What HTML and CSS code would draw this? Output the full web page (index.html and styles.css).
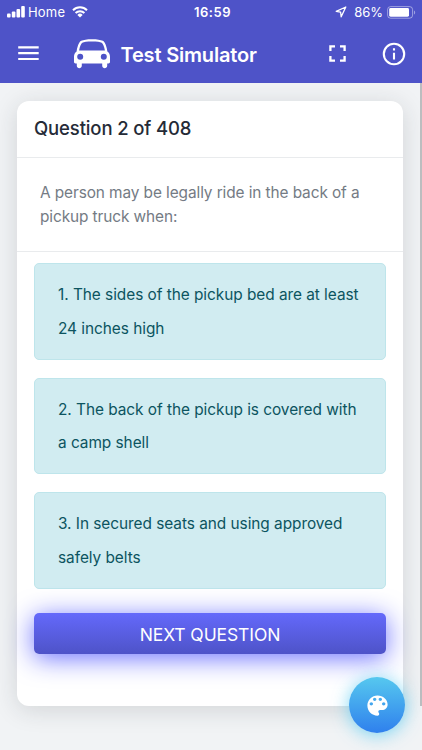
FILE: index.html
```html
<!DOCTYPE html>
<html lang="en">
<head>
    <meta charset="UTF-8">
    <meta name="viewport" content="width=device-width, initial-scale=1.0">
    <title>Test Simulator</title>
    <link rel="stylesheet" href="styles.css">
</head>
<body>
    <header class="app-header">
        <div class="status-bar">
            <div class="status-left">
                <svg class="signal" width="19" height="12" viewBox="0 0 19 12" fill="#fff">
                    <rect x="0" y="7.5" width="3.6" height="4" rx="1"/>
                    <rect x="4.8" y="5.5" width="3.6" height="6" rx="1"/>
                    <rect x="9.5" y="3" width="3.6" height="8.5" rx="1"/>
                    <rect x="14.2" y="0" width="3.6" height="11.5" rx="1"/>
                </svg>
                <span class="carrier">Home</span>
                <svg class="wifi" width="16" height="12" viewBox="0 0 16 12" fill="none" stroke="#fff" stroke-width="2">
                    <path d="M1 4.2a10 10 0 0 1 14 0M3.6 7a6.3 6.3 0 0 1 8.8 0"/>
                    <path d="M8 11.5 5.4 8.9a3.7 3.7 0 0 1 5.2 0z" fill="#fff" stroke="none"/>
                </svg>
            </div>
            <span class="clock">16:59</span>
            <div class="status-right">
                <svg width="12" height="12" viewBox="0 0 12 12" fill="none" stroke="#fff" stroke-width="1.3" stroke-linejoin="round">
                    <path d="M10.8 1 1.2 5.3l4.4.9.6 4.6z"/>
                </svg>
                <span class="percent">86%</span>
                <svg width="29" height="13" viewBox="0 0 29 13">
                    <rect x=".6" y=".6" width="25" height="11.6" rx="3" fill="none" stroke="#fff" stroke-opacity=".45"/>
                    <rect x="2.2" y="2.1" width="19.8" height="8.6" rx="1.4" fill="#fff"/>
                    <path d="M27 4.4v4c1.6-.5 1.6-3.5 0-4z" fill="#fff" fill-opacity=".45"/>
                </svg>
            </div>
        </div>
        <nav class="toolbar">
            <svg class="menu" width="21" height="15" viewBox="0 0 21 15" fill="#fff">
                <path d="M.2.3h20.500v2.200H.2zM.2 6.100h20.500v2.200H.2zM.2 11.900h20.500v2.200H.2z"/>
            </svg>
            <svg class="car" width="36" height="30" viewBox="0 0 36 30" fill="#fff">
                <path fill-rule="evenodd" d="M18 .2c-5.200 0-8.500.5-10.800 1.600C4.800 3 3.300 8 2.600 12.400.8 13.600 0 15.400 0 17.800v5c0 1 .6 1.600 1.600 1.700h1.200v2.300c0 3.200 5 3.200 5 0v-2.300h20.400v2.300c0 3.200 5 3.200 5 0v-2.300h1.200c1-.1 1.600-.7 1.600-1.700v-5c0-2.400-.8-4.200-2.600-5.400C32.700 8 31.200 3 28.800 1.800 26.500.7 23.200.2 18 .2zM18 2.500c5 0 8.100.5 9.700 1.300 1.200.6 2.600 3.900 3.200 7.800H5.100C5.700 7.700 7.100 4.400 8.300 3.800 9.900 3 13 2.500 18 2.500zM6.200 14.700a3 3 0 1 0 0 6 3 3 0 0 0 0-6zM29.800 14.700a3 3 0 1 0 0 6 3 3 0 0 0 0-6z"/>
            </svg>
            <h1 class="title">Test Simulator</h1>
            <svg class="fullscreen" width="17" height="17" viewBox="0 0 17 17" fill="none" stroke="#fff" stroke-width="2.3">
                <path d="M1.400 6V1.400H6M11 1.400h4.600V6M15.600 11v4.600H11M6 15.600H1.400V11"/>
            </svg>
            <svg class="info" width="24" height="24" viewBox="0 0 24 24" fill="none" stroke="#fff" stroke-width="2.1">
                <circle cx="12" cy="12" r="10.2"/>
                <path d="M12 10.800v6.700M12 6.200v2.300"/>
            </svg>
        </nav>
    </header>

    <main class="content">
        <section class="card">
            <h2 class="card-header">Question 2 of 408</h2>
            <p class="question">A person may be legally ride in the back of a<br>pickup truck when:</p>
            <div class="answers">
                <div class="answer">1. The sides of the pickup bed are at least<br>24 inches high</div>
                <div class="answer">2. The back of the pickup is covered with<br>a camp shell</div>
                <div class="answer">3. In secured seats and using approved<br>safely belts</div>
                <button class="next">NEXT QUESTION</button>
            </div>
        </section>
    </main>

    <div class="scrollbar"></div>
    <button class="theme-button" aria-label="Theme">
        <svg width="27" height="27" viewBox="0 0 24 24" fill="#fff">
            <path d="M12 3c-4.970 0-9 4.030-9 9s4.030 9 9 9c.83 0 1.500-.67 1.500-1.500 0-.39-.15-.74-.39-1.010-.23-.26-.38-.61-.38-.99 0-.83.67-1.500 1.500-1.500H16c2.760 0 5-2.240 5-5 0-4.420-4.030-8-9-8zm-5.500 9c-.83 0-1.500-.67-1.500-1.500S5.670 9 6.500 9 8 9.670 8 10.500 7.330 12 6.500 12zm3-4C8.670 8 8 7.330 8 6.500S8.670 5 9.500 5s1.500.67 1.500 1.500S10.330 8 9.500 8zm5 0c-.83 0-1.500-.67-1.500-1.500S13.670 5 14.500 5s1.500.67 1.500 1.500S15.330 8 14.500 8zm3 4c-.83 0-1.500-.67-1.500-1.500S16.670 9 17.500 9s1.500.67 1.500 1.500-.67 1.500-1.500 1.500z"/>
        </svg>
    </button>
</body>
</html>
```
FILE: styles.css
```css
:root {
    --primary: #4e53c8;
    --page: #f1f3f5;
    --answer: #d1ecf1;
    --answer-text: #0c5460;
}
* {
    box-sizing: border-box;
}
body {
    margin: 0;
    height: 750px;
    overflow: hidden;
    background: var(--page);
    font-family: Inter, "Liberation Sans", sans-serif;
}
svg {
    display: block;
    flex: none;
}
.app-header {
    height: 83px;
    background: var(--primary);
    color: #fff;
}
.status-bar {
    height: 24px;
    padding: 0 7px;
    display: grid;
    grid-template-columns: 1fr auto 1fr;
    align-items: center;
    font-size: 13px;
    line-height: 24px;
}
.status-left,
.status-right {
    display: flex;
    align-items: center;
}
.status-right {
    justify-content: flex-end;
}
.carrier {
    margin-left: 2px;
    width: 38px;
    font-size: 13px;
    letter-spacing: 0.2px;
}
.wifi {
    margin-left: 6px;
}
.clock {
    font-weight: 600;
    letter-spacing: 0.5px;
    margin-left: 3px;
}
.percent {
    margin: 0 4px 0 6px;
}
.status-right svg:first-child {
    margin-right: 1px;
}
.status-right svg:last-child {
    margin-right: -1px;
}
.toolbar {
    height: 59px;
    padding: 0 16px 0 18px;
    display: flex;
    align-items: center;
}
.car {
    margin: 1px 0 0 34.5px;
}
.title {
    margin: 3px auto 0 11px;
    font-size: 20px;
    font-weight: 600;
    line-height: 28px;
    letter-spacing: -0.18px;
    white-space: nowrap;
}
.info {
    margin-left: 36px;
}
.content {
    padding: 18px 19px 0 17px;
}
.card {
    height: 605px;
    background: #fff;
    border-radius: 12px;
    box-shadow: 0 4px 24px rgba(34, 41, 47, 0.15);
}
.card-header {
    margin: 0;
    height: 57px;
    padding: 0 17px;
    border-bottom: 1px solid #e9ebed;
    color: #252b37;
    font-size: 18.5px;
    font-weight: 500;
    line-height: 55px;
    letter-spacing: -0.13px;
}
.question {
    margin: 0;
    height: 94px;
    padding: 23px;
    border-bottom: 1px solid #e9ebed;
    color: #747b84;
    font-size: 15.4px;
    line-height: 24px;
    letter-spacing: -0.09px;
    white-space: nowrap;
}
.answers {
    padding: 11px 17px 0;
    display: flex;
    flex-direction: column;
    gap: 18px;
}
.answer {
    height: 96.6px;
    padding: 14px 23px;
    border: 1px solid #bee5eb;
    border-radius: 5px;
    background: var(--answer);
    color: var(--answer-text);
    font-size: 15.4px;
    line-height: 33.6px;
    letter-spacing: -0.04px;
    white-space: nowrap;
}
.next {
    margin-top: 6.5px;
    height: 41px;
    padding: 2px 0 0;
    border: none;
    border-radius: 5px;
    background: linear-gradient(#6469fb, #4e53c8);
    box-shadow: 0 4px 26px rgba(100, 105, 255, 0.95);
    color: #fff;
    font-family: inherit;
    font-size: 17.5px;
    letter-spacing: -0.1px;
}
.scrollbar {
    position: absolute;
    top: 83px;
    right: 0;
    width: 2.5px;
    height: 623px;
    background: #bcbdbf;
}
.theme-button {
    position: absolute;
    right: 17px;
    bottom: 17px;
    width: 56px;
    height: 56px;
    padding: 0;
    display: flex;
    align-items: center;
    justify-content: center;
    border: none;
    border-radius: 50%;
    background: linear-gradient(#56c8ef, #2f80ed);
    box-shadow: 0 2px 18px rgba(86, 204, 242, 0.8);
}
```
